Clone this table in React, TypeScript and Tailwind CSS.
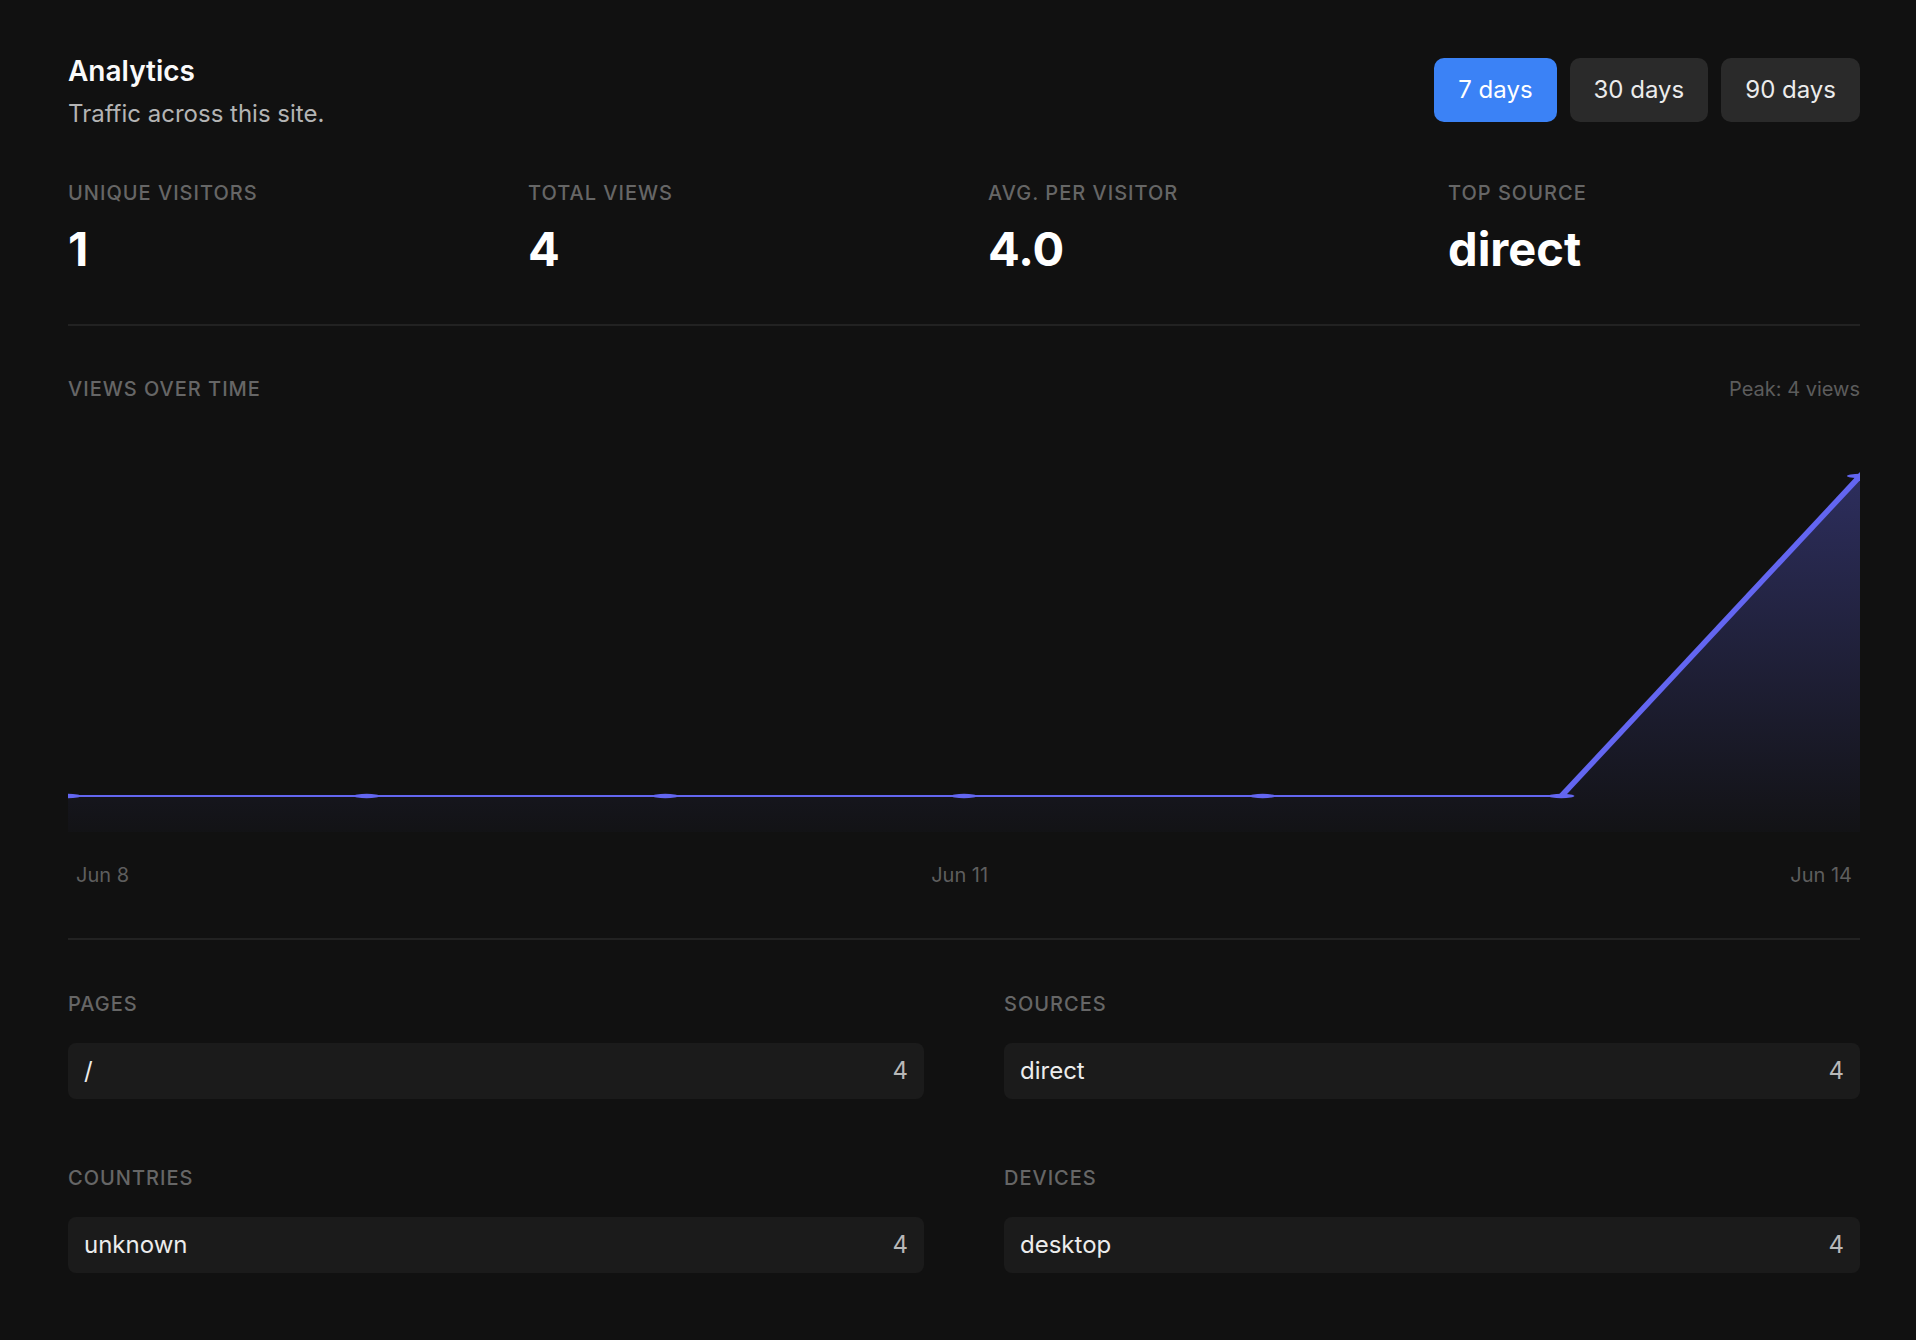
const stats = [
  { label: "Unique visitors", value: "1" },
  { label: "Total views", value: "4" },
  { label: "Avg. per visitor", value: "4.0" },
  { label: "Top source", value: "direct" },
];

const ranges = ["7 days", "30 days", "90 days"];

const breakdowns = [
  { title: "Pages", rows: [{ name: "/", count: 4 }] },
  { title: "Sources", rows: [{ name: "direct", count: 4 }] },
  { title: "Countries", rows: [{ name: "unknown", count: 4 }] },
  { title: "Devices", rows: [{ name: "desktop", count: 4 }] },
];

const series = [0, 0, 0, 0, 0, 0, 4];

function ViewsChart() {
  const w = 1792;
  const h = 396;
  const top = 40;
  const base = 360;
  const max = Math.max(...series);
  const pts = series.map((v, i) => ({
    x: (i * w) / (series.length - 1),
    y: base - (v / max) * (base - top),
  }));
  const flat = pts.slice(0, -1);
  const last = pts[pts.length - 1];
  const prev = pts[pts.length - 2];
  const area = `M0,${base} ${pts.map((p) => `L${p.x},${p.y}`).join(" ")} L${w},${h} L0,${h} Z`;

  return (
    <svg viewBox={`0 0 ${w} ${h}`} width={w} height={h} className="block">
      <defs>
        <linearGradient id="viewsFill" x1="0" y1={top} x2="0" y2={h} gradientUnits="userSpaceOnUse">
          <stop offset="0%" stopColor="#6366f1" stopOpacity="0.34" />
          <stop offset="100%" stopColor="#6366f1" stopOpacity="0.02" />
        </linearGradient>
      </defs>
      <path d={area} fill="url(#viewsFill)" />
      <line x1={0} y1={base} x2={flat[flat.length - 1].x} y2={base} stroke="#6366f1" strokeWidth={2} />
      <line x1={prev.x} y1={prev.y} x2={last.x + 2} y2={last.y - 2} stroke="#6366f1" strokeWidth={5.5} />
      {pts.map((p, i) => (
        <ellipse key={i} cx={p.x} cy={p.y} rx={13} ry={2.2} fill="#6366f1" />
      ))}
    </svg>
  );
}

export default function App() {
  return (
    <div className="min-h-[1340px] bg-[#111111] pt-[51px] pb-[60px] pl-[68px] pr-[56px] font-['Inter',sans-serif] text-white">
      <header className="flex items-start justify-between">
        <div>
          <h1 className="text-[28px] leading-[40px] font-semibold text-[#fafafa]">Analytics</h1>
          <p className="mt-[5px] text-[24px] leading-[36px] text-[#b4b4b4]">Traffic across this site.</p>
        </div>
        <div className="mt-[7px] flex gap-[13px]">
          {ranges.map((r, i) => (
            <button
              key={r}
              className={
                i === 0
                  ? "h-[64px] rounded-[10px] bg-[#3b82f6] px-[24px] text-[24px] text-white"
                  : "h-[64px] rounded-[10px] bg-[#2a2a2a] px-[24px] text-[24px] text-[#ececec]"
              }
            >
              {r}
            </button>
          ))}
        </div>
      </header>

      <section className="mt-[46px] grid grid-cols-4 gap-[48px] border-b-2 border-[#222222] pb-[48px]">
        {stats.map((s) => (
          <div key={s.label}>
            <p className="text-[20px] leading-[30px] font-medium uppercase tracking-wider text-[#666666]">
              {s.label}
            </p>
            <p className="mt-[14px] text-[47px] leading-[54px] font-bold text-white">{s.value}</p>
          </div>
        ))}
      </section>

      <section className="border-b-2 border-[#222222] pt-[48px] pb-[48px]">
        <div className="flex items-center justify-between">
          <p className="text-[20px] leading-[30px] font-medium uppercase tracking-wider text-[#666666]">
            Views over time
          </p>
          <p className="text-[20px] leading-[30px] text-[#5c5c5c]">Peak: 4 views</p>
        </div>
        <div className="mt-[32px]">
          <ViewsChart />
        </div>
        <div className="mt-[28px] flex justify-between px-[8px] text-[20px] leading-[30px] text-[#5e5e5e]">
          <span>Jun 8</span>
          <span>Jun 11</span>
          <span>Jun 14</span>
        </div>
      </section>

      <section className="grid grid-cols-2 gap-x-[80px] gap-y-[64px] pt-[49px]">
        {breakdowns.map((b) => (
          <div key={b.title}>
            <p className="text-[20px] leading-[30px] font-medium uppercase tracking-wider text-[#666666]">
              {b.title}
            </p>
            <div className="mt-[24px] flex flex-col gap-[8px]">
              {b.rows.map((r) => (
                <div
                  key={r.name}
                  className="flex h-[56px] items-center justify-between rounded-[8px] bg-[#1b1b1b] px-[16px] text-[24px]"
                >
                  <span className="text-[#ececec]">{r.name}</span>
                  <span className="text-[#b8b8b8]">{r.count}</span>
                </div>
              ))}
            </div>
          </div>
        ))}
      </section>
    </div>
  );
}
